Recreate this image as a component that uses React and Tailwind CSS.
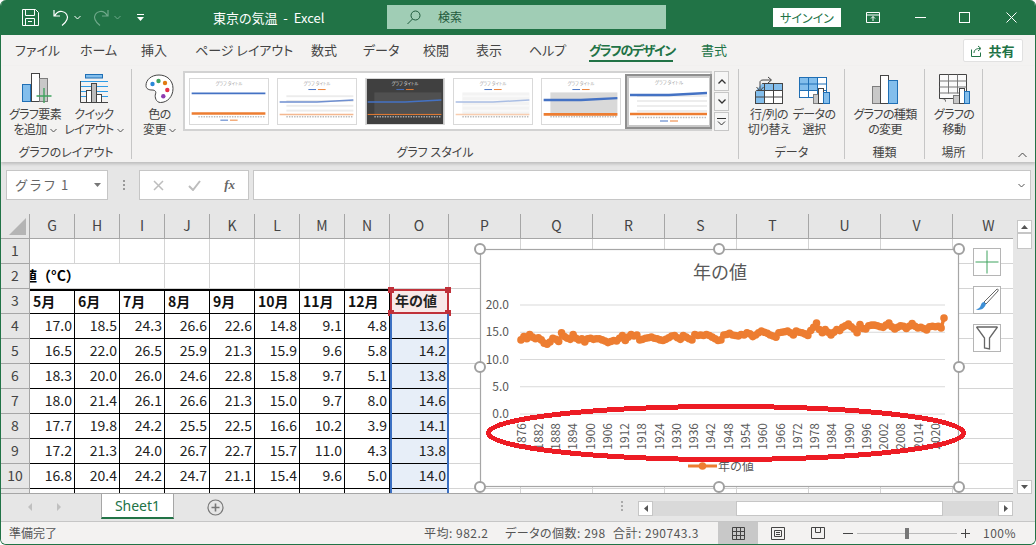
import React from 'react';

const COLUMNS = ['G', 'H', 'I', 'J', 'K', 'L', 'M', 'N', 'O', 'P', 'Q', 'R', 'S', 'T', 'U', 'V', 'W'];
const TABS = [
  ['ファイル', 'w-[37px]'], ['ホーム', 'w-[33px]'], ['挿入', 'w-[26px]'], ['ページ レイアウト', 'w-[88px]'],
  ['数式', 'w-[24px]'], ['データ', 'w-[32px]'], ['校閲', 'w-[25px]'], ['表示', 'w-[25px]'], ['ヘルプ', 'w-[32px]'],
];
const MONTHS = ['5月', '6月', '7月', '8月', '9月', '10月', '11月', '12月'];
const TABLE = [
  ['17.0', '18.5', '24.3', '26.6', '22.6', '14.8', '9.1', '4.8', '13.6'],
  ['16.5', '22.0', '26.5', '25.9', '21.3', '15.9', '9.6', '5.8', '14.2'],
  ['18.3', '20.0', '26.0', '24.6', '22.8', '15.8', '9.7', '5.1', '13.8'],
  ['18.0', '21.4', '26.1', '26.6', '21.3', '15.0', '9.7', '8.0', '14.6'],
  ['17.7', '19.8', '24.2', '25.5', '22.5', '16.6', '10.2', '3.9', '14.1'],
  ['17.2', '21.3', '24.0', '26.7', '22.7', '15.7', '11.0', '4.3', '13.8'],
  ['16.8', '20.4', '24.2', '24.7', '21.1', '15.4', '9.6', '5.0', '14.0'],
  ['', '', '', '', '', '', '', '', ''],
];
const SERIES = [
  13.6, 14.2, 13.8, 14.6, 14.1, 13.8, 14.0, 13.6, 13.0, 12.8,
  13.2, 13.9, 13.7, 13.3, 14.9, 14.2, 13.9, 13.7, 14.6, 13.9,
  13.6, 13.8, 13.2, 13.8, 13.9, 13.7, 13.8, 13.8, 13.6, 13.4,
  13.1, 13.3, 13.5, 13.4, 13.9, 14.4, 13.5, 14.1, 14.6, 14.3,
  14.5, 13.6, 13.7, 13.9, 14.0, 14.1, 13.9, 13.8, 13.6, 13.5,
  13.7, 14.0, 14.3, 14.4, 14.0, 13.7, 14.4, 14.1, 13.8, 13.6,
  14.6, 14.4, 14.5, 14.4, 14.6, 14.4, 14.1, 13.8, 13.5, 13.6,
  14.5, 14.6, 14.8, 14.5, 14.4, 14.3, 14.6, 14.5, 14.9, 14.7,
  14.2, 14.5, 14.9, 15.2, 15.0, 14.8, 14.5, 14.3, 14.1, 14.9,
  15.0, 15.1, 15.2, 14.9, 14.5, 15.2, 15.0, 14.9, 14.7, 14.4,
  15.3, 15.9, 16.7, 15.5, 14.9, 15.5, 15.0, 14.5, 15.0, 15.5,
  15.3, 15.9, 16.2, 16.5, 16.0, 15.6, 14.9, 16.4, 15.7, 15.6,
  16.2, 16.3, 16.3, 16.2, 16.0, 15.9, 16.3, 16.7, 16.0, 15.6,
  15.9, 16.2, 16.1, 15.7, 16.1, 16.6, 16.1, 15.8, 15.9, 15.7,
  15.4, 16.0, 16.1, 16.0, 16.1, 15.8, 17.6,
];
const YEARS = Array.from({ length: 25 }, (_, i) => 1876 + i * 6);

const Caret = ({ className = 'text-[#555]' }) => (
  <svg width="7" height="5" viewBox="0 0 7 5" className={`inline-block ${className}`}>
    <path d="M.5 1 3.5 4 6.5 1" fill="none" stroke="currentColor" strokeWidth="1" />
  </svg>
);

// ribbon icons -----------------------------------------------------
const IconAddElement = () => (
  <svg width="30" height="31" viewBox="0 0 30 31" className="ml-[4px]">
    <rect x=".5" y="11.5" width="8" height="17" fill="#83beec" stroke="#1f6fb5" />
    <rect x="9.5" y=".5" width="8" height="28" fill="#fff" stroke="#444" />
    <rect x="17.5" y="5.5" width="8" height="23" fill="#c8c8c8" stroke="#7d7d7d" />
    <path d="M22 15v15M14.5 23h15" stroke="#3fa35f" strokeWidth="1.4" />
  </svg>
);
const IconQuickLayout = () => (
  <svg width="29" height="30" viewBox="0 0 29 30">
    <rect x="5.5" y=".5" width="17" height="3.5" fill="#83beec" stroke="#1f6fb5" />
    <path d="M1 7.5h27M1 12.5h27M1 17.5h27M1 22.5h27" stroke="#2e9be6" />
    <path d="M.5 7v21.5H28" fill="none" stroke="#444" />
    <rect x="6.5" y="16.5" width="5" height="12" fill="#fff" stroke="#444" />
    <rect x="11.5" y="9.5" width="5" height="19" fill="#bdbdbd" stroke="#444" />
    <rect x="16.5" y="20.5" width="5" height="8" fill="#fff" stroke="#444" />
  </svg>
);
const IconPalette = () => (
  <svg width="29" height="30" viewBox="0 0 29 30">
    <path d="M14 1C6 1 1 6 1 11.5c0 3.5 3 4.5 6 4.5 3 0 4.5 1.5 3.5 4-1 3 .5 8.5 5 8.5 7 0 12.5-6 12.5-14S22 1 14 1Z" fill="#fff" stroke="#444" />
    <circle cx="7.5" cy="10" r="2.2" fill="#2b88d8" />
    <circle cx="13.5" cy="7" r="2.2" fill="#3fa35f" />
    <circle cx="20" cy="9" r="2.2" fill="#e07b12" />
    <circle cx="22.3" cy="16" r="2.2" fill="#e5304a" />
    <circle cx="18.3" cy="22.3" r="2.2" fill="#8e3bb0" />
  </svg>
);
const IconSwitch = () => (
  <svg width="30" height="28" viewBox="0 0 30 28">
    <rect x="1.5" y="7.5" width="27" height="20" fill="#fff" stroke="#444" />
    <rect x="1.5" y="7.5" width="9" height="20" fill="#83beec" />
    <rect x="1.5" y="7.5" width="27" height="7" fill="#83beec" />
    <rect x="1.5" y="7.5" width="27" height="20" fill="none" stroke="#444" />
    <path d="M10.5 7.5v20M19.5 7.5v20M1.5 14.5h27M1.5 21h27" stroke="#444" />
    <path d="M0 17 11 4h-11Z" fill="#f3f2f1" />
    <path d="M6 14V6c0-1 1-2 3-2h8M14 1l3.500 3L14 7M2.500 11 6 15l3.500-4" fill="none" stroke="#444" />
  </svg>
);
const IconSelectData = () => (
  <svg width="31" height="28" viewBox="0 0 31 28">
    <rect x=".5" y="1.500" width="27" height="20" fill="#fff" stroke="#444" />
    <rect x=".5" y="1.500" width="18" height="13" fill="#83beec" />
    <path d="M.5 1.500h27v20H.5ZM9.500 1.500v20M18.500 1.500v20M.5 8h27M.5 14.500h27" fill="none" stroke="#1f6fb5" />
    <rect x="14.500" y="18.500" width="6" height="9" fill="#c8c8c8" stroke="#7d7d7d" />
    <rect x="19.500" y="12.500" width="5" height="15" fill="#fff" stroke="#444" />
    <rect x="24.500" y="16.500" width="6" height="11" fill="#83beec" stroke="#1f6fb5" />
  </svg>
);
const IconChangeType = () => (
  <svg width="26" height="29" viewBox="0 0 26 29">
    <rect x=".5" y="11.500" width="8" height="17" fill="#c8c8c8" stroke="#7d7d7d" />
    <rect x="8.500" y=".5" width="8" height="28" fill="#fff" stroke="#444" />
    <rect x="16.500" y="5.500" width="9" height="23" fill="#83beec" stroke="#1f6fb5" />
  </svg>
);
const IconMove = () => (
  <svg width="31" height="30" viewBox="0 0 31 30">
    <path d="M.5.5h27v24h-8M.5.5v24h19" fill="#fafafa" stroke="#444" />
    <path d="M.5 7h27M.5 13h27M.5 19h27M9.500.5v19M18.500.5v19" stroke="#777" />
    <path d="M.5 24.500c4 0 6 0 6 3" fill="none" stroke="#444" />
    <rect x="14.500" y="21.500" width="6" height="8" fill="#c8c8c8" stroke="#7d7d7d" />
    <rect x="20.500" y="14.500" width="5" height="15" fill="#fff" stroke="#444" />
    <rect x="25.500" y="17.500" width="5" height="12" fill="#83beec" stroke="#1f6fb5" />
  </svg>
);

// one small preview in the chart style gallery
const Thumb = ({ dark, plot, bands, blue, blueW, orange, orangeW, y1, y2, yo, legendY = 11, selected }) => (
  <svg width="80" height="47" viewBox="0 0 80 47" className={`block shrink-0 ${selected ? '' : 'border border-[#d9d9d9]'}`}>
    <rect width="80" height="47" fill={dark ? '#404040' : '#fff'} />
    <text x="40" y="6" textAnchor="middle" fontSize="4.5" fill={dark ? '#ddd' : '#a0a0a0'}>グラフ タイトル</text>
    {plot && <rect x="8" y="14" width="70" height="24" fill={plot} />}
    {bands && [17, 22, 27, 32].map((y) => <rect key={y} x="8" y={y} width="70" height="2" fill={bands} />)}
    <path d={`M1 ${y1}H40L78 ${y2}`} stroke={blue} strokeWidth={blueW} fill="none" />
    <path d={`M1 ${yo}H78`} stroke={orange} strokeWidth={orangeW} fill="none" />
    <path d="M8 39.500H78" stroke={dark ? '#aaa' : '#bbb'} strokeWidth="1.500" strokeDasharray="1.500 1.200" />
    <path d={`M31 ${legendY}H39`} stroke="#4472c4" strokeWidth="1" />
    <path d={`M41 ${legendY}H49`} stroke="#ed7d31" strokeWidth="1" />
  </svg>
);

const BigButton = ({ icon, lines, caret, className = '' }) => (
  <div className={`flex flex-col items-center shrink-0 ${className}`}>
    <div className="h-[33px] flex items-end justify-center">{icon}</div>
    <div className="mt-[2px] text-[12px] leading-[15px] tracking-[-0.6px] text-center text-[#444] whitespace-nowrap">
      <div>{lines[0]}</div>
      <div>
        {lines[1]}
        {caret && <span className="ml-[3px]"><Caret /></span>}
      </div>
    </div>
  </div>
);

const Group = ({ className, label, children }) => (
  <div className={`flex flex-col shrink-0 border-r border-[#c6c6c6] h-[90px] mt-[3px] ${className}`}>
    <div className="flex h-[76px] pt-[2px]">{children}</div>
    <div className="text-[12px] leading-[15px] text-center text-[#444] whitespace-nowrap">{label}</div>
  </div>
);

const TitleBar = () => (
  <div className="h-[35px] bg-[#217346] flex items-center shrink-0 text-white [font-feature-settings:'palt']">
    <div className="w-[212px] flex items-center pl-[21px] shrink-0">
      <svg width="17" height="17" viewBox="0 0 17 17" fill="none" stroke="#fff">
        <path d="M.5.5h13l3 3v13H.5Z" />
        <path d="M3.500.5v6h9v-6M3.500 16.500v-7h9v7M6 12.500h4" />
      </svg>
      <svg width="16" height="17" viewBox="0 0 16 17" fill="none" stroke="#fff" strokeWidth="1.200" className="ml-[14px]">
        <path d="M1 1v6h6M1.500 7C3.500 3.500 6 2 9 2.500c4 .7 6.500 4 5 8-1 2.500-3 4.500-5 6" />
      </svg>
      <span className="ml-[5px] flex"><Caret className="text-white" /></span>
      <svg width="16" height="17" viewBox="0 0 16 17" fill="none" stroke="#6fa88a" strokeWidth="1.200" className="ml-[12px]">
        <path d="M15 1v6H9M14.500 7C12.500 3.500 10 2 7 2.500c-4 .7-6.500 4-5 8 1 2.500 3 4.500 5 6" />
      </svg>
      <span className="ml-[5px] flex"><Caret className="text-[#6fa88a]" /></span>
      <svg width="7" height="7" viewBox="0 0 7 7" className="ml-[16px]" fill="#fff">
        <path d="M0 0h7v1H0ZM0 3h7L3.500 7Z" />
      </svg>
    </div>
    <div className="w-[174px] shrink-0 text-[13px] whitespace-nowrap">東京の気温&nbsp; -&nbsp; Excel</div>
    <div className="w-[279px] h-[24px] -mt-[1px] bg-[#a0cdb5] flex items-center shrink-0 text-[#1f5a3c] text-[12px]">
      <svg width="14" height="15" viewBox="0 0 14 15" fill="none" stroke="#1f5a3c" className="ml-[20px]">
        <circle cx="8.500" cy="5.500" r="4.500" />
        <path d="M5.500 9 .5 14" />
      </svg>
      <span className="ml-[17px]">検索</span>
    </div>
    <div className="w-[107px] shrink-0" />
    <div className="w-[68px] h-[19px] bg-white text-[#217346] text-[12px] leading-[19px] text-center shrink-0">サインイン</div>
    <svg width="14" height="11" viewBox="0 0 14 11" fill="none" stroke="#fff" className="ml-[25px] shrink-0">
      <path d="M.5.5h13v10H.5ZM.5 3h13M7 9V4.500M5 6.500l2-2 2 2" />
    </svg>
    <div className="ml-[35px] w-[11px] h-px bg-white shrink-0" />
    <div className="ml-[33px] w-[11px] h-[11px] border border-white shrink-0" />
    <svg width="11" height="11" viewBox="0 0 11 11" stroke="#fff" className="ml-[36px] shrink-0">
      <path d="M.5.5l10 10M10.500.5l-10 10" />
    </svg>
  </div>
);

const TabRow = () => (
  <div className="h-[31px] flex items-start bg-[#f3f2f1] shrink-0 pl-[14px] text-[13px] text-[#444] relative [font-feature-settings:'palt']">
    <div className="flex gap-[28px] pt-[6px] leading-[18px] whitespace-nowrap">
      {TABS.map(([name, width]) => <div key={name} className={width}>{name}</div>)}
      <div className="w-[84px] font-bold text-[#217346] border-b-[2px] border-[#217346] h-[21px] tracking-[-1.4px]">グラフのデザイン</div>
      <div className="w-[26px] text-[#217346]">書式</div>
    </div>
    <div className="ml-auto mr-[12px] mt-[4px] w-[60px] h-[23px] bg-white border border-[#e1e1e1] rounded-[2px] flex items-center justify-center gap-[6px] text-[#217346] font-bold text-[13px]">
      <svg width="11" height="12" viewBox="0 0 11 12" fill="none" stroke="#217346">
        <path d="M.5 4.500v7h9v-4M3 8c0-3 2-4.500 6-4.500M7 1l3 2.500L7 6" />
      </svg>
      共有
    </div>
  </div>
);

const Ribbon = () => (
  <div className="h-[96px] flex items-start bg-[#f3f2f1] shrink-0 relative z-10 shadow-[0_2px_3px_rgba(0,0,0,0.18)] [font-feature-settings:'palt']">
    <Group className="w-[131px]" label="グラフのレイアウト">
      <BigButton className="w-[60px] ml-[4px]" icon={<IconAddElement />} lines={['グラフ要素', 'を追加']} caret />
      <BigButton className="w-[58px]" icon={<IconQuickLayout />} lines={['クイック', 'レイアウト']} caret />
    </Group>
    <Group className="w-[607px]" label="グラフ スタイル">
      <BigButton className="w-[47px] ml-[4px]" icon={<IconPalette />} lines={['色の', '変更']} caret />
      <div className="flex h-[60px]">
        <div className="w-[529px] h-[60px] bg-white border-2 border-[#d2d2d2] flex items-center pl-[4px] gap-[8px]">
          <Thumb blue="#4472c4" blueW="2" orange="#ed7d31" orangeW="2.500" y1={15} y2={15} yo={36} legendY={43} />
          <Thumb bands="#ececec" blue="#6f8fd0" blueW="1.500" orange="#f4b890" orangeW="1.500" y1={24} y2={22} yo={37} />
          <Thumb dark plot="#505050" blue="#4472c4" blueW="1.500" orange="#ed7d31" orangeW="1" y1={24} y2={22} yo={37} />
          <Thumb plot="#f3f3f3" bands="#f9f9f9" blue="#a9bde3" blueW="1.500" orange="#f8cdb0" orangeW="1.500" y1={24} y2={22} yo={37} />
          <Thumb plot="#d9d9d9" blue="#4472c4" blueW="2.500" orange="#ed7d31" orangeW="3" y1={22} y2={20} yo={37} />
          <div className="w-[87px] h-[55px] bg-[#c8c8c8] border-2 border-[#8f8f8f] flex items-center justify-center -ml-[4px] shrink-0">
            <Thumb selected bands="#ededed" blue="#4472c4" blueW="2.500" orange="#ed7d31" orangeW="2.500" y1={17} y2={15} yo={36} legendY={43} />
          </div>
        </div>
        <div className="ml-[2px] w-[15px] flex flex-col gap-[1px]">
          <div className="h-[20px] border border-[#c6c6c6] bg-[#f6f6f6] flex items-center justify-center">
            <svg width="8" height="5" viewBox="0 0 8 5" fill="none" stroke="#333" strokeWidth="1.300"><path d="M.5 4.500 4 1l3.500 3.500" /></svg>
          </div>
          <div className="h-[19px] border border-[#c6c6c6] bg-[#f6f6f6] flex items-center justify-center">
            <svg width="8" height="5" viewBox="0 0 8 5" fill="none" stroke="#333" strokeWidth="1.300"><path d="M.5.5 4 4 7.500.5" /></svg>
          </div>
          <div className="h-[19px] border border-[#c6c6c6] bg-[#f6f6f6] flex items-center justify-center">
            <svg width="9" height="8" viewBox="0 0 9 8" fill="none" stroke="#333"><path d="M0 .5h9M1 3.500l3.500 3.500L8 3.500" /></svg>
          </div>
        </div>
      </div>
    </Group>
    <Group className="w-[106px]" label="データ">
      <BigButton className="w-[44px] ml-[8px]" icon={<IconSwitch />} lines={['行/列の', '切り替え']} />
      <BigButton className="w-[42px] ml-[2px]" icon={<IconSelectData />} lines={['データの', '選択']} />
    </Group>
    <Group className="w-[80px]" label="種類">
      <BigButton className="w-[80px]" icon={<IconChangeType />} lines={['グラフの種類', 'の変更']} />
    </Group>
    <Group className="w-[58px]" label="場所">
      <BigButton className="w-[58px]" icon={<IconMove />} lines={['グラフの', '移動']} />
    </Group>
    <svg width="9" height="6" viewBox="0 0 9 6" fill="none" stroke="#444" className="ml-[35px] mt-[86px]">
      <path d="M.5 5 4.500 1l4 4" />
    </svg>
  </div>
);

const FormulaBar = () => (
  <div className="h-[52px] flex items-start pt-[8px] bg-[#e6e6e6] shrink-0 pl-[5px]">
    <div className="w-[102px] h-[30px] bg-white border border-[#c6c6c6] flex items-center pl-[8px] pr-[6px] text-[13px] text-[#666] tracking-[1px]">
      グラフ 1
      <svg width="7" height="4" viewBox="0 0 7 4" className="ml-auto" fill="#777"><path d="M0 0h7L3.500 4Z" /></svg>
    </div>
    <div className="w-[31px] h-[30px] flex flex-col items-center justify-center gap-[2px]">
      <div className="w-[2px] h-[2px] bg-[#999]" />
      <div className="w-[2px] h-[2px] bg-[#999]" />
      <div className="w-[2px] h-[2px] bg-[#999]" />
    </div>
    <div className="w-[110px] h-[30px] bg-white border border-[#c6c6c6] flex items-center justify-between px-[13px]">
      <svg width="11" height="11" viewBox="0 0 11 11" stroke="#bdbdbd" strokeWidth="1.500"><path d="M1 1l9 9M10 1l-9 9" /></svg>
      <svg width="13" height="11" viewBox="0 0 13 11" fill="none" stroke="#bdbdbd" strokeWidth="2"><path d="M1 6l4 4 7-9" /></svg>
      <span className="font-['Liberation_Serif',serif] italic font-bold text-[13px] text-[#666]">fx</span>
    </div>
    <div className="ml-[4px] w-[778px] h-[30px] bg-white border border-[#c6c6c6] flex items-center justify-end pr-[5px]">
      <Caret />
    </div>
  </div>
);

const LineChart = () => {
  const px = (i) => 521 + i * (423 / (SERIES.length - 1));
  const py = (v) => 414 - v * 5.45;
  const line = SERIES.map((v, i) => `${i ? 'L' : 'M'}${px(i).toFixed(1)} ${py(v).toFixed(1)}`).join('');
  const handles = [[480, 249], [719, 249], [959, 249], [480, 367], [959, 367], [480, 487], [719, 487], [959, 487]];
  return (
    <svg width="500" height="252" viewBox="472 241 500 252" className="absolute left-[471px] top-[27px]">
      <rect x="480.500" y="249.500" width="478" height="237" fill="#fff" stroke="#a6a6a6" strokeWidth="1.200" />
      <text x="720" y="279" textAnchor="middle" fontSize="18" fill="#595959">年の値</text>
      {[20, 15, 10, 5, 0].map((v) => (
        <g key={v}>
          <path d={`M520 ${py(v)}H945`} stroke="#d9d9d9" strokeWidth="1" />
          <text x="509" y={py(v) + 4} textAnchor="end" fontSize="12" fill="#595959">{v.toFixed(1)}</text>
        </g>
      ))}
      {YEARS.map((y, i) => {
        const x = 521.500 + i * 17.27;
        return (
          <text key={y} x={x + 4} y="423" textAnchor="end" fontSize="12" fill="#595959" transform={`rotate(-90 ${x + 4} 423)`}>{y}</text>
        );
      })}
      <path d={line} fill="none" stroke="#ed7d31" strokeWidth="3.500" strokeLinejoin="round" />
      {SERIES.map((v, i) => <circle key={i} cx={px(i)} cy={py(v)} r="3.800" fill="#ed7d31" />)}
      <path d="M688 466H717" stroke="#ed7d31" strokeWidth="3" />
      <circle cx="702.500" cy="466" r="3.800" fill="#ed7d31" />
      <text x="718" y="471" fontSize="12" fill="#595959">年の値</text>
      <ellipse cx="726" cy="433" rx="237.500" ry="26.500" fill="none" stroke="#ed1c24" strokeWidth="5" shapeRendering="crispEdges" />
      {handles.map(([x, y]) => <circle key={`${x}-${y}`} cx={x} cy={y} r="5" fill="#fff" stroke="#a0a0a0" strokeWidth="2" />)}
    </svg>
  );
};

const ChartTool = ({ className, children }) => (
  <div className={`absolute left-[972px] w-[28px] h-[28px] bg-white border border-[#b5b5b5] flex items-center justify-center ${className}`}>{children}</div>
);

const Sheet = () => {
  const gridCell = 'border-r border-b border-[#d4d4d4]';
  const head = 'bg-[#e6e6e6] text-[14px] leading-[22px] text-center text-[#444]';
  const dataCell = 'border-r border-b border-black text-[14px] leading-[22px] text-right pr-[2px] text-[#222]';
  const rest = COLUMNS.slice(9);
  return (
    <div className="relative h-[280px] shrink-0 overflow-hidden flex bg-[#e6e6e6]">
      <div className="w-[1012px] h-[280px] overflow-hidden shrink-0 bg-white border-b border-[#a6a6a6]">
        <div className="grid grid-cols-[29px_repeat(8,45px)_59px_repeat(7,72px)_72px] auto-rows-[25px]">
          {/* column headers */}
          <div className="bg-[#e6e6e6] border-r border-b border-[#a6a6a6] flex items-end justify-end p-[3px]">
            <svg width="17" height="17" viewBox="0 0 17 17" fill="#b4b4b4"><path d="M17 0V17H0Z" /></svg>
          </div>
          {COLUMNS.map((c) => <div key={c} className={`${head} border-r border-b border-[#a6a6a6]`}>{c}</div>)}

          {/* rows 1, 2 */}
          <div className={`${head} border-r border-b border-[#a6a6a6]`}>1</div>
          {COLUMNS.map((c) => <div key={c} className={gridCell} />)}
          <div className={`${head} border-r border-b border-[#a6a6a6]`}>2</div>
          <div className="col-span-2 overflow-hidden border-b border-[#d4d4d4] text-[14px] font-bold leading-[23px] whitespace-nowrap">
            <div className="-ml-[7px]">値（°C）</div>
          </div>
          {COLUMNS.slice(2).map((c) => <div key={c} className={gridCell} />)}

          {/* row 3, table header */}
          <div className={`${head} border-r border-b border-[#a6a6a6]`}>3</div>
          {MONTHS.map((m) => (
            <div key={m} className="border-r border-b border-black border-t-2 border-t-black text-[14px] font-bold leading-[20px] pl-[3px] text-[#111] whitespace-nowrap">{m}</div>
          ))}
          <div className="relative bg-[#f8e9e9] border-2 border-[#c0313a] text-[14px] font-bold leading-[19px] pl-[3px] text-[#222]">
            年の値
            <div className="absolute -left-[4px] -top-[4px] w-[6px] h-[6px] bg-[#c0313a]" />
            <div className="absolute -right-[4px] -top-[4px] w-[6px] h-[6px] bg-[#c0313a]" />
            <div className="absolute -left-[4px] -bottom-[4px] w-[6px] h-[6px] bg-[#c0313a]" />
            <div className="absolute -right-[4px] -bottom-[4px] w-[6px] h-[6px] bg-[#c0313a]" />
          </div>
          {rest.map((c) => <div key={c} className={gridCell} />)}

          {/* data rows */}
          {TABLE.map((row, r) => (
            <React.Fragment key={r}>
              <div className={`${head} border-r border-b border-[#a6a6a6]`}>{r < 7 ? r + 4 : ''}</div>
              {row.slice(0, 8).map((v, c) => <div key={c} className={dataCell}>{v}</div>)}
              <div className="bg-[#e7eef8] border-x-2 border-x-[#3c70c2] text-[14px] leading-[22px] text-right pr-[1px] text-[#222] relative">
                {row[8]}
                <div className="absolute left-0 right-0 bottom-0 h-px bg-black" />
              </div>
              {rest.map((c) => <div key={c} className={gridCell} />)}
            </React.Fragment>
          ))}
        </div>
      </div>

      {/* vertical scrollbar */}
      <div className="flex-1 flex flex-col items-center pt-[6px]">
        <div className="w-[15px] h-[13px] bg-white border border-[#c6c6c6] flex items-center justify-center">
          <svg width="7" height="4" viewBox="0 0 7 4" fill="#555"><path d="M0 4h7L3.500 0Z" /></svg>
        </div>
        <div className="w-[15px] h-[16px] bg-white border border-[#c6c6c6]" />
        <div className="flex-1" />
        <div className="w-[15px] h-[14px] bg-white border border-[#c6c6c6] flex items-center justify-center">
          <svg width="7" height="4" viewBox="0 0 7 4" fill="#555"><path d="M0 0h7L3.500 4Z" /></svg>
        </div>
      </div>

      <LineChart />
      <ChartTool className="top-[34px]">
        <svg width="24" height="24" viewBox="0 0 24 24" stroke="#3fa35f"><path d="M12 .5v23M.5 12h23" /></svg>
      </ChartTool>
      <ChartTool className="top-[72px]">
        <svg width="24" height="24" viewBox="0 0 24 24">
          <path d="M22 1 9 14l2 2L23 3c.5-1-.2-2.300-1-2Z" fill="#fff" stroke="#666" />
          <path d="M9 14c-3 0-3 4-4 5-1 1.500-3 2-4 2.500 3 1 8 .5 10-5.500Z" fill="#3d8fd6" />
        </svg>
      </ChartTool>
      <ChartTool className="top-[110px]">
        <svg width="22" height="24" viewBox="0 0 22 24" fill="none" stroke="#666" strokeWidth="1.300"><path d="M.5 1h21M.5 1l8 11v10l5 1V12l8-11" /></svg>
      </ChartTool>
    </div>
  );
};

const SheetTabs = () => (
  <div className="h-[28px] bg-[#e6e6e6] flex items-start shrink-0 border-b border-[#c6c6c6] relative">
    <svg width="34" height="8" viewBox="0 0 34 8" fill="#c0c0c0" className="ml-[27px] mt-[9px] shrink-0">
      <path d="M4 0v8L0 4ZM29 0v8l4-4Z" />
    </svg>
    <div className="ml-[39px] w-[73px] h-[25px] bg-white border-x border-[#a6a6a6] border-b-[2px] border-b-[#217346] text-[#217346] text-[14px] font-['Noto_Sans',sans-serif] leading-[23px] text-center shrink-0">Sheet1</div>
    <svg width="17" height="17" viewBox="0 0 17 17" fill="none" stroke="#777" strokeWidth="1.200" className="ml-[33px] mt-[5px] shrink-0">
      <circle cx="8.500" cy="8.500" r="7.500" />
      <path d="M8.500 4.500v8M4.500 8.500h8" strokeWidth="1.600" />
    </svg>
    <div className="ml-[397px] mt-[7px] flex flex-col gap-[2px] shrink-0">
      <div className="w-[2px] h-[2px] bg-[#aaa]" />
      <div className="w-[2px] h-[2px] bg-[#aaa]" />
      <div className="w-[2px] h-[2px] bg-[#aaa]" />
    </div>
    <div className="ml-[15px] mt-[7px] w-[375px] h-[15px] bg-[#d9d9d9] flex shrink-0">
      <div className="w-[15px] bg-white border border-[#c6c6c6] flex items-center justify-center">
        <svg width="4" height="7" viewBox="0 0 4 7" fill="#555"><path d="M4 0v7L0 3.500Z" /></svg>
      </div>
      <div className="ml-[83px] w-[207px] bg-white border border-[#c6c6c6]" />
      <div className="ml-auto w-[15px] bg-white border border-[#c6c6c6] flex items-center justify-center">
        <svg width="4" height="7" viewBox="0 0 4 7" fill="#555"><path d="M0 0v7l4-3.500Z" /></svg>
      </div>
    </div>
  </div>
);

const StatusBar = () => (
  <div className="flex-1 bg-[#f3f2f1] flex items-center text-[12px] text-[#555] whitespace-nowrap [font-feature-settings:'palt']">
    <div className="ml-[8px] w-[415px] shrink-0">準備完了</div>
    <div className="w-[81px] shrink-0 tracking-[0.5px]">平均: 982.2</div>
    <div className="w-[108px] shrink-0 tracking-[0.5px]">データの個数: 298</div>
    <div className="w-[105px] shrink-0 tracking-[0.5px]">合計: 290743.3</div>
    <div className="w-[40px] h-full bg-[#c8c8c8] flex items-center justify-center shrink-0">
      <svg width="13" height="13" viewBox="0 0 13 13" fill="none" stroke="#444"><path d="M.5.5h12v12H.5ZM4.500.5v12M8.500.5v12M.5 4.500h12M.5 8.500h12" /></svg>
    </div>
    <div className="w-[40px] flex justify-center shrink-0">
      <svg width="14" height="13" viewBox="0 0 14 13" fill="none" stroke="#444"><path d="M.5.5h13v12H.5ZM3.500 3.500h7v6h-7ZM5 5.500h4M5 7.500h4" /></svg>
    </div>
    <div className="w-[40px] flex justify-center shrink-0">
      <svg width="14" height="12" viewBox="0 0 14 12" fill="none" stroke="#444"><path d="M.5.5h13v11H.5ZM4.500.5v5h5v-5" /></svg>
    </div>
    <div className="ml-[5px] w-[10px] h-px bg-[#444] shrink-0" />
    <div className="ml-[4px] w-[100px] h-px bg-[#bbb] relative shrink-0">
      <div className="absolute left-[48px] -top-[5px] w-[4px] h-[11px] bg-[#777]" />
    </div>
    <svg width="9" height="9" viewBox="0 0 9 9" stroke="#444" className="ml-[4px] shrink-0"><path d="M4.500 0v9M0 4.500h9" /></svg>
    <div className="ml-[13px] tracking-[0.5px]">100%</div>
  </div>
);

export default function App() {
  return (
    <div className="w-[1036px] h-[545px] flex flex-col overflow-hidden rounded-[6px] border-x border-b border-[#217346] bg-[#e6e6e6] font-['Noto_Sans_CJK_JP','Noto_Sans',sans-serif]">
      <TitleBar />
      <TabRow />
      <Ribbon />
      <FormulaBar />
      <Sheet />
      <SheetTabs />
      <StatusBar />
    </div>
  );
}
